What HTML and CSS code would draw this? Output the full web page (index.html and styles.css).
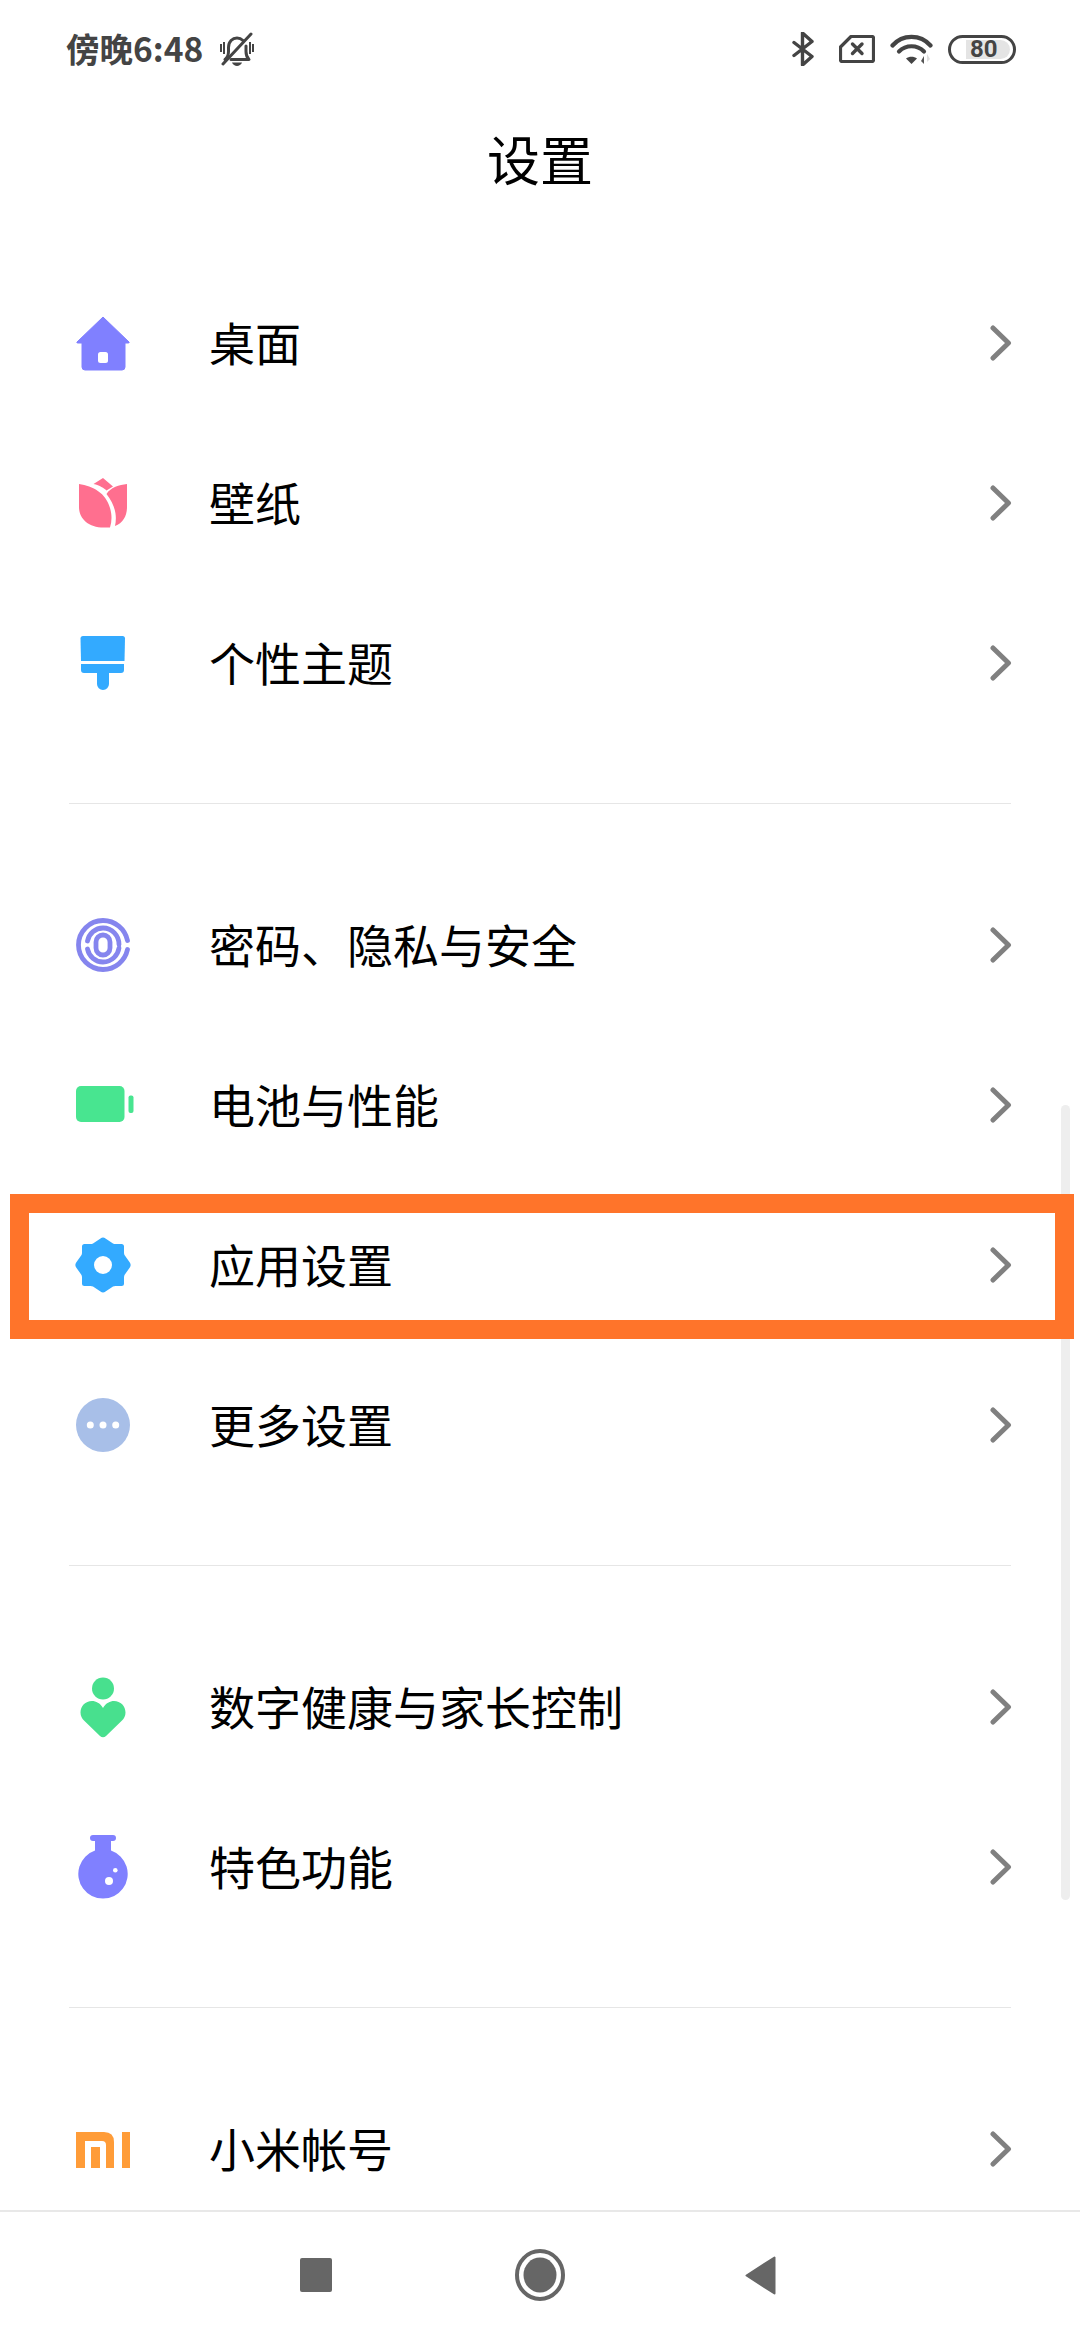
FILE: index.html
```html
<!DOCTYPE html>
<html lang="zh-CN">
<head>
<meta charset="utf-8">
<title>设置</title>
<link rel="stylesheet" href="styles.css">
</head>
<body>
<div class="screen">
  <header class="status">
    <div class="status-left">
      <span class="time">傍晚6:48</span>
      <svg class="ic-bell" viewBox="0 0 34 34"><g fill="none" stroke="#444" stroke-width="3" stroke-linecap="round" stroke-linejoin="round"><path d="M5 27.500c2.500-2 3.500-4 3.500-8v-4C8.500 9.500 12.500 6 17 6c2.500 0 4.500 1 6 2.500M26 14v5.500c0 4 1 6 3 8H11"/><path d="M3 32 31 2"/></g><path d="M12 30.500h10c-.8 2-3 3.500-5 3.500s-4.200-1.500-5-3.500z" fill="#444"/><path d="M1 12v8M4 10v12M33 12v8M30 10v12" stroke="#444" stroke-width="2" fill="none"/></svg>
    </div>
    <div class="status-right">
      <svg class="ic-bt" viewBox="0 0 22 34"><path d="M2 10.500 20 24.500 10.500 33V1L20 9.500 2 23.500" fill="none" stroke="#444" stroke-width="3.400" stroke-linecap="round" stroke-linejoin="round"/></svg>
      <svg class="ic-sim" viewBox="0 0 36 28"><path d="M12 1.500H33a1.500 1.500 0 0 1 1.500 1.500V25a1.500 1.500 0 0 1-1.500 1.500H3A1.500 1.500 0 0 1 1.500 25V12z" fill="none" stroke="#444" stroke-width="3.200" stroke-linejoin="round"/><path d="M13.500 9 23 18.500M23 9l-9.500 9.500" stroke="#444" stroke-width="3.400" stroke-linecap="round"/></svg>
      <svg class="ic-wifi" viewBox="0 0 43 30"><g fill="none" stroke="#444" stroke-width="4.200" stroke-linecap="round"><path d="M2.500 11.500C12.500 0 30.500 0 40.500 11.500"/><path d="M9 17.500c7-7 18-7 25 0"/></g><path d="M16 24.500c3-2.500 8-2.500 11 0l-5.500 5.500z" fill="#444"/><path d="M34 22v8l-3-3z" fill="#555"/><path d="M37 20v8l3-3z" fill="#ddd"/></svg>
      <div class="battery"><div class="battery-fill">80</div></div>
    </div>
  </header>

  <h1 class="title">设置</h1>

  <main class="list">
    <section class="group">
      <div class="row">
        <svg class="icon" viewBox="0 0 68 68"><path d="M34 8 60 33a.6.6 0 0 1-.5 1H56V58a3 3 0 0 1-3 3H16a3 3 0 0 1-3-3V34H8.500a.6.6 0 0 1-.5-1z" fill="#8080ff" stroke="#8080ff" stroke-linejoin="round"/><rect x="29" y="43" width="10" height="11" rx="2.500" fill="#fff"/></svg>
        <span class="label">桌面</span>
        <svg class="chev" viewBox="0 0 24 36"><path d="M4 3 19.500 18 4 33" /></svg>
      </div>
      <div class="row">
        <svg class="icon" viewBox="0 0 68 68"><g fill="#ff6f8f"><path d="M34 9 44 17.500 37.500 21.500C35 19 31 16.500 24.500 15z"/><path d="M10 15C24 17 37 24 41 39 43 46 43 52 41 58.500H36C20 59 10 50 10 38z"/><path d="M58 15V38C58 47 54 54 46 57 48 48 47 37 37.500 25 42 18 50 16 58 15z"/></g></svg>
        <span class="label">壁纸</span>
        <svg class="chev" viewBox="0 0 24 36"><path d="M4 3 19.500 18 4 33" /></svg>
      </div>
      <div class="row">
        <svg class="icon" viewBox="0 0 68 68"><g fill="#33aaff"><path d="M14 7H53.500A2.500 2.500 0 0 1 56 9.500L55.500 32H12L11.500 9.500A2.500 2.500 0 0 1 14 7z"/><path d="M12 35H55V41A3 3 0 0 1 52 44H40V55A6 6 0 0 1 28 55V44H15A3 3 0 0 1 12 41z"/></g></svg>
        <span class="label">个性主题</span>
        <svg class="chev" viewBox="0 0 24 36"><path d="M4 3 19.500 18 4 33" /></svg>
      </div>
    </section>
    <hr class="divider">
    <section class="group">
      <div class="row">
        <svg class="icon" viewBox="0 0 68 68"><g fill="none" stroke="#8585ee" stroke-width="4.800" stroke-linecap="round"><path d="M58.500 29.500C56 18 46 9.500 34 9.500 20.500 9.500 9.500 20.500 9.500 34S20.500 58.500 34 58.500C46 58.500 56 50 58.500 38.500"/><path d="M18.500 30C20 22.500 26.500 17 34 17 43 17 50 24.500 50 33.500M50 37C49 44 43 51 34 51 26.500 51 20 45.500 18.500 38"/><rect x="27" y="24" width="14" height="20" rx="7"/></g></svg>
        <span class="label">密码、隐私与安全</span>
        <svg class="chev" viewBox="0 0 24 36"><path d="M4 3 19.500 18 4 33" /></svg>
      </div>
      <div class="row">
        <svg class="icon" viewBox="0 0 68 68"><g fill="#48e590"><rect x="7" y="15" width="48.500" height="36" rx="5"/><rect x="59.500" y="24.500" width="5" height="17.500" rx="2"/></g></svg>
        <span class="label">电池与性能</span>
        <svg class="chev" viewBox="0 0 24 36"><path d="M4 3 19.500 18 4 33" /></svg>
      </div>
      <div class="row">
        <svg class="icon" viewBox="0 0 68 68"><path d="M31.500 7.500Q34 5.500 36.500 7.500L44 12.500Q45 13 46.500 13H52.500Q55 13 55 15.500V21.500Q55 23 55.500 24L60.800 31.500Q62.500 34 60.800 36.500L55.500 44Q55 45 55 46.500V52.500Q55 55 52.500 55H46.500Q45 55 44 55.500L36.500 60.500Q34 62.500 31.500 60.500L24 55.500Q23 55 21.500 55H15.500Q13 55 13 52.500V46.500Q13 45 12.500 44L7.200 36.500Q5.500 34 7.200 31.500L12.500 24Q13 23 13 21.500V15.500Q13 13 15.500 13H21.500Q23 13 24 12.500z" fill="#33aaff"/><circle cx="34" cy="34" r="9" fill="#fff"/></svg>
        <span class="label">应用设置</span>
        <svg class="chev" viewBox="0 0 24 36"><path d="M4 3 19.500 18 4 33" /></svg>
      </div>
      <div class="row">
        <svg class="icon" viewBox="0 0 68 68"><circle cx="34" cy="34" r="27" fill="#a8bfe8"/><g fill="#fff"><circle cx="21.300" cy="34" r="3.500"/><circle cx="34" cy="34" r="3.500"/><circle cx="46.700" cy="34" r="3.500"/></g></svg>
        <span class="label">更多设置</span>
        <svg class="chev" viewBox="0 0 24 36"><path d="M4 3 19.500 18 4 33" /></svg>
      </div>
    </section>
    <hr class="divider">
    <section class="group">
      <div class="row">
        <svg class="icon" viewBox="0 0 68 68"><g fill="#48e08e"><circle cx="34" cy="15.500" r="11"/><path d="M34 35C37 30 41 28 45 28 51.500 28 56.500 33 56.500 39.500 56.500 43 55 45.500 53 47.500L37 63C35.300 64.700 32.700 64.700 31 63L15 47.500C13 45.500 11.500 43 11.500 39.500 11.500 33 16.500 28 23 28 27 28 31 30 34 35z"/></g></svg>
        <span class="label">数字健康与家长控制</span>
        <svg class="chev" viewBox="0 0 24 36"><path d="M4 3 19.500 18 4 33" /></svg>
      </div>
      <div class="row">
        <svg class="icon" viewBox="0 0 68 68"><path d="M24 2H44A3 3 0 0 1 44 8H42V17.500A24.700 24.700 0 1 1 26 17.500V8H24A3 3 0 0 1 24 2z" fill="#8080ff"/><circle cx="40" cy="48" r="4" fill="#fff"/><circle cx="46.300" cy="37.300" r="2.300" fill="#fff"/></svg>
        <span class="label">特色功能</span>
        <svg class="chev" viewBox="0 0 24 36"><path d="M4 3 19.500 18 4 33" /></svg>
      </div>
    </section>
    <hr class="divider">
    <section class="group">
      <div class="row">
        <svg class="icon" viewBox="0 0 68 68"><g fill="#ff9c38"><path d="M7 17H35Q45 17 45 27V53H37V30Q37 26 33 26H16V53H7z"/><rect x="22" y="32" width="9" height="21"/><rect x="53" y="17" width="8" height="36"/></g></svg>
        <span class="label">小米帐号</span>
        <svg class="chev" viewBox="0 0 24 36"><path d="M4 3 19.500 18 4 33" /></svg>
      </div>
    </section>
  </main>

  <nav class="nav">
    <svg class="nav-square" viewBox="0 0 32 34"><rect width="32" height="34" rx="2" fill="#666"/></svg>
    <svg class="nav-home" viewBox="0 0 50 52"><ellipse cx="25" cy="26" rx="23" ry="24" fill="none" stroke="#666" stroke-width="4"/><ellipse cx="25" cy="26" rx="16.500" ry="17.500" fill="#666"/></svg>
    <svg class="nav-back" viewBox="0 0 31 39"><path d="M29.500 1.500V37.500L1.500 19.500z" fill="#666" stroke="#666" stroke-width="2" stroke-linejoin="round"/></svg>
  </nav>

  <div class="scrollbar"></div>
  <div class="highlight"></div>
</div>
</body>
</html>
```
FILE: styles.css
```css
* { box-sizing: border-box; }
html, body { margin: 0; padding: 0; background: #fff; }
body { font-family: "Noto Sans CJK SC", "Noto Sans", sans-serif; color: #000; }

.screen {
  position: relative;
  width: 1080px;
  height: 2340px;
  display: flex;
  flex-direction: column;
  overflow: hidden;
  background: #fff;
}

.status {
  height: 100px;
  flex: none;
  display: flex;
  align-items: center;
  justify-content: space-between;
  padding: 0 64px 2px 66px;
}
.status-left { display: flex; align-items: center; gap: 17px; }
.status-right { display: flex; align-items: center; gap: 15px; }
.time { font-size: 33.5px; font-weight: 700; color: #444; line-height: 40px; margin-top: -2px; }
.ic-bell { width: 34px; height: 34px; }
.ic-bt { width: 22px; height: 34px; margin-right: 10px; }
.ic-sim { width: 36px; height: 28px; }
.ic-wifi { width: 43px; height: 30px; }

.battery {
  width: 68px;
  height: 29px;
  border: 3.5px solid #444;
  border-radius: 15px;
  display: flex;
  justify-content: flex-end;
  padding: 2px 3px;
}
.battery-fill {
  width: 44px;
  background: #e4e4e4;
  border-radius: 0 10px 10px 0;
  font-family: Roboto, sans-serif;
  font-size: 24px;
  font-weight: 700;
  line-height: 18px;
  color: #444;
  padding-left: 4px;
}

.title {
  margin: -2px 0 2px;
  flex: none;
  height: 120px;
  line-height: 120px;
  text-align: center;
  font-size: 53px;
  font-weight: 400;
}

.list { flex: 1; min-height: 0; overflow: hidden; padding-top: 43px; }
.group { display: flex; flex-direction: column; }
.row {
  height: 160px;
  display: flex;
  align-items: center;
  padding: 0 67px 0 69px;
}
.icon { width: 68px; height: 68px; flex: none; }
.label { flex: 1; margin-left: 72px; font-size: 46px; line-height: 60px; padding-bottom: 4px; }
.chev { width: 24px; height: 36px; flex: none; }
.chev path { fill: none; stroke: #808080; stroke-width: 5; stroke-linecap: round; stroke-linejoin: round; }

.divider {
  margin: 60px 69px 61px;
  border: 0;
  height: 1px;
  background: #e6e6e6;
}

.nav {
  flex: none;
  height: 130px;
  border-top: 2px solid #e8e8e8;
  background: #fff;
  position: relative;
  display: flex;
  align-items: center;
  justify-content: space-between;
  padding: 0 304px 2px 300px;
}
.nav-square { width: 32px; height: 34px; }
.nav-home { width: 50px; height: 52px; margin-left: 3px; }
.nav-back { width: 31px; height: 39px; }

.scrollbar {
  position: absolute;
  left: 1061px;
  top: 1105px;
  width: 9px;
  height: 795px;
  border-radius: 5px;
  background: #eee;
}
.highlight {
  position: absolute;
  left: 10px;
  top: 1194px;
  width: 1064px;
  height: 145px;
  border: 19px solid #ff742a;
}
```
